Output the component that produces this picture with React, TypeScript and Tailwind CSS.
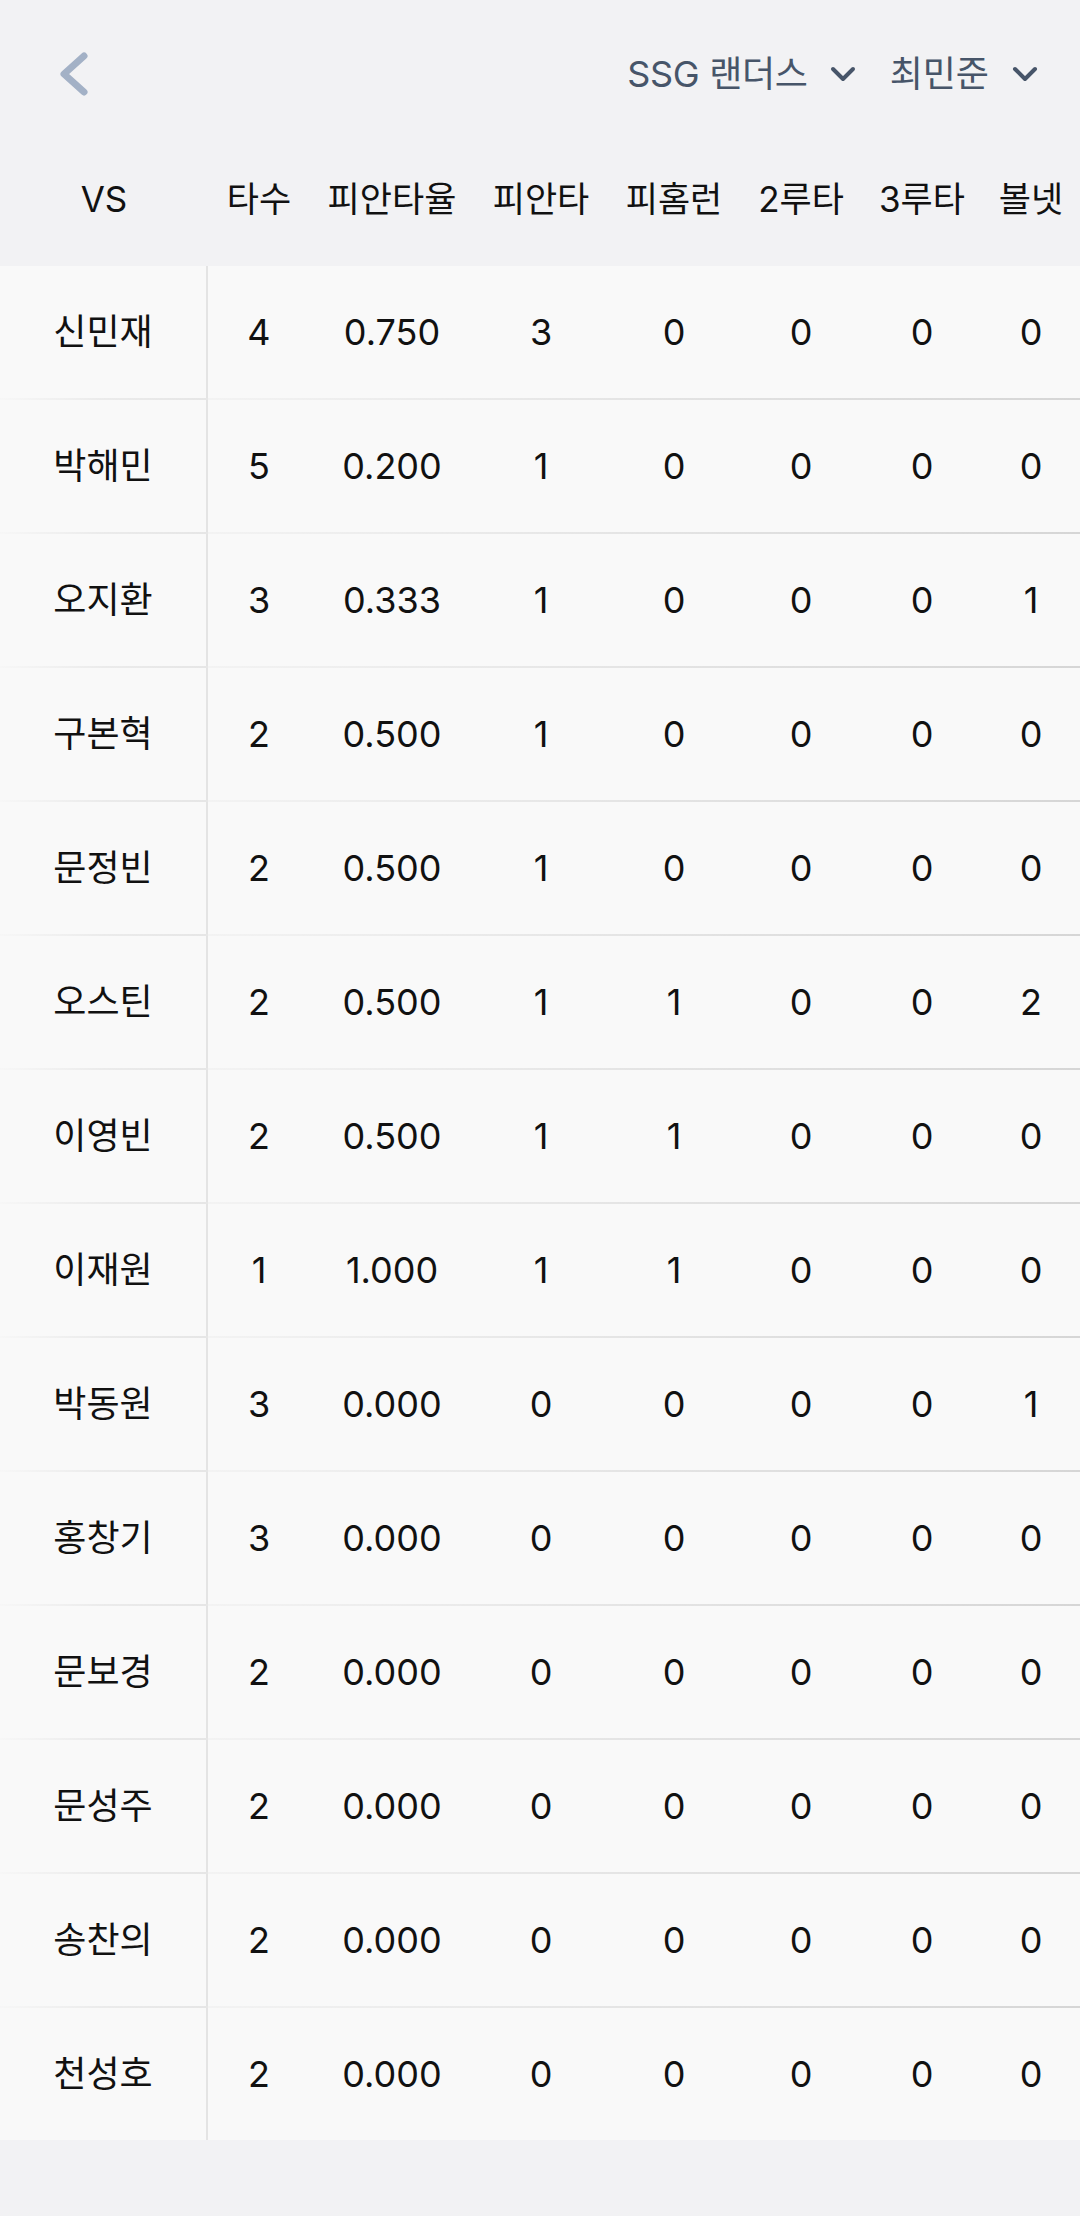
const rows: [string, number, string, number, number, number, number, number][] = [
  ['신민재', 4, '0.750', 3, 0, 0, 0, 0],
  ['박해민', 5, '0.200', 1, 0, 0, 0, 0],
  ['오지환', 3, '0.333', 1, 0, 0, 0, 1],
  ['구본혁', 2, '0.500', 1, 0, 0, 0, 0],
  ['문정빈', 2, '0.500', 1, 0, 0, 0, 0],
  ['오스틴', 2, '0.500', 1, 1, 0, 0, 2],
  ['이영빈', 2, '0.500', 1, 1, 0, 0, 0],
  ['이재원', 1, '1.000', 1, 1, 0, 0, 0],
  ['박동원', 3, '0.000', 0, 0, 0, 0, 1],
  ['홍창기', 3, '0.000', 0, 0, 0, 0, 0],
  ['문보경', 2, '0.000', 0, 0, 0, 0, 0],
  ['문성주', 2, '0.000', 0, 0, 0, 0, 0],
  ['송찬의', 2, '0.000', 0, 0, 0, 0, 0],
  ['천성호', 2, '0.000', 0, 0, 0, 0, 0],
];

const headers = ['타수', '피안타율', '피안타', '피홈런', '2루타', '3루타', '볼넷'];
// widths chosen so each column's centre lines up with the screenshot
const colW = ['w-[102px]', 'w-[164px]', 'w-[134px]', 'w-[132px]', 'w-[122px]', 'w-[120px]', 'w-[98px]'];

function ChevronDown() {
  return (
    <svg width="26" height="16" viewBox="0 0 26 16" fill="none">
      <path d="M3 3l10 10L23 3" stroke="#475569" strokeWidth="4" strokeLinecap="round" strokeLinejoin="round" />
    </svg>
  );
}

export default function App() {
  return (
    <div
      className="w-[1080px] h-[2216px] bg-[#f2f2f4] text-[#111111]"
      style={{ fontFamily: 'Inter, "Noto Sans CJK KR", sans-serif' }}
    >
      {/* Top bar */}
      <div className="h-[132px] flex items-start justify-between pt-[52px] pl-[58px] pr-[42px]">
        <svg width="32" height="44" viewBox="0 0 32 44" fill="none">
          <path d="M26 4L6 22l20 18" stroke="#a3b1c6" strokeWidth="7" strokeLinecap="round" strokeLinejoin="round" />
        </svg>
        <div className="flex items-center h-[44px] text-[36px] text-[#475569]">
          <span className="tracking-[-0.3px]">SSG 랜더스</span>
          <span className="ml-[22px]"><ChevronDown /></span>
          <span className="ml-[34px]">최민준</span>
          <span className="ml-[23px]"><ChevronDown /></span>
        </div>
      </div>

      {/* Header row */}
      <div className="h-[134px] flex items-center text-[35px]">
        <div className="w-[208px] text-center">VS</div>
        {headers.map((h, i) => (
          <div key={h} className={`${colW[i]} text-center shrink-0 whitespace-nowrap`}>
            {h}
          </div>
        ))}
      </div>

      {/* Rows */}
      <div className="bg-[#f9f9f9]">
        {rows.map((r, idx) => (
          <div key={r[0]} className="flex flex-col">
            <div className="h-[132px] flex items-center text-[36px]">
              <div className="w-[208px] h-full flex items-center justify-center border-r-2 border-[#e4e4e4]">
                {r[0]}
              </div>
              {r.slice(1).map((v, i) => (
                <div key={i} className={`${colW[i]} text-center shrink-0`}>
                  {v}
                </div>
              ))}
            </div>
            {idx < rows.length - 1 && (
              <div className="h-[2px] flex">
                <div className="w-[208px] bg-gradient-to-r from-[#f7f7f7] via-[#ebebeb] to-[#e6e6e6]" />
                <div className="flex-1 bg-gradient-to-r from-[#f3f3f3] via-[#e4e4e4] to-[#d6d6d6]" />
              </div>
            )}
          </div>
        ))}
      </div>
    </div>
  );
}
